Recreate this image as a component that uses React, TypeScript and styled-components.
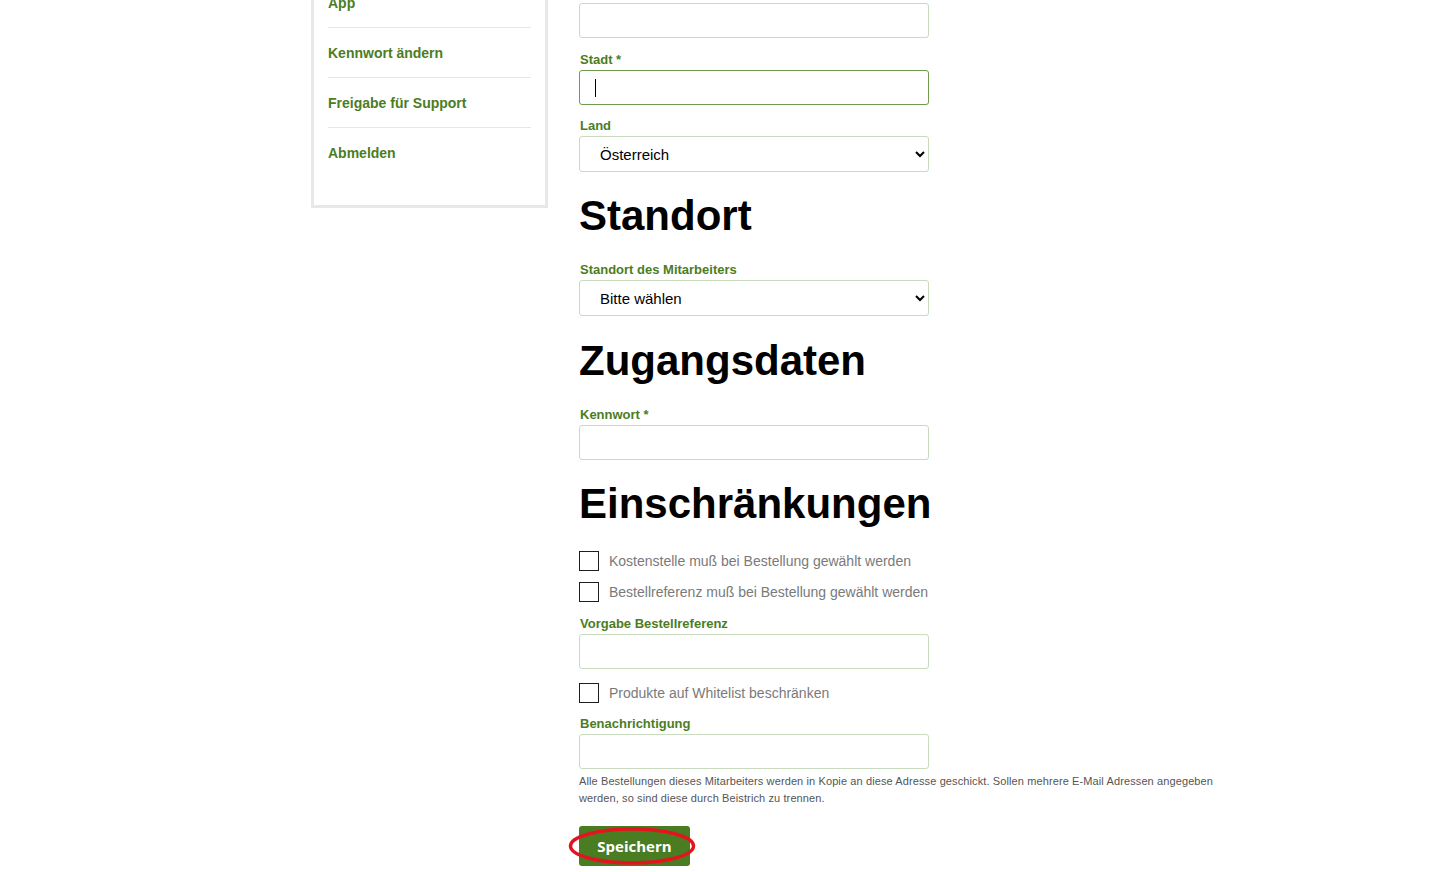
import styled, { createGlobalStyle } from "styled-components";

const GlobalStyle = createGlobalStyle`
  body {
    margin: 0;
    background: #ffffff;
    font-family: "Liberation Sans", Arial, sans-serif;
    overflow: hidden;
  }
`;

const green = "#4b7d1f";

const sideLinks = ["App", "Kennwort ändern", "Freigabe für Support", "Abmelden"];

const App = () => {
  return (
    <>
      <GlobalStyle />
      <Layout>
        <Sidebar>
          {sideLinks.map((link, i) => (
            <SideItem key={link} last={i === sideLinks.length - 1}>
              <SideLink href="#">{link}</SideLink>
            </SideItem>
          ))}
        </Sidebar>

        <Main>
          <Field spacing={14}>
            <TextInput type="text" />
          </Field>

          <Field>
            <Label>Stadt *</Label>
            <CaretWrap>
              <TextInput type="text" focused />
              <Caret />
            </CaretWrap>
          </Field>

          <Field>
            <Label>Land</Label>
            <Select defaultValue="at">
              <option value="at">Österreich</option>
              <option value="de">Deutschland</option>
            </Select>
          </Field>

          <Heading>Standort</Heading>

          <Field spacing={14}>
            <Label>Standort des Mitarbeiters</Label>
            <Select defaultValue="">
              <option value="">Bitte wählen</option>
            </Select>
          </Field>

          <Heading>Zugangsdaten</Heading>

          <Field>
            <Label>Kennwort *</Label>
            <TextInput type="password" />
          </Field>

          <Heading>Einschränkungen</Heading>

          <CheckGroup top={1} bottom={14}>
            <CheckRow>
              <Checkbox type="checkbox" />
              <CheckText>Kostenstelle muß bei Bestellung gewählt werden</CheckText>
            </CheckRow>
            <CheckRow>
              <Checkbox type="checkbox" />
              <CheckText>Bestellreferenz muß bei Bestellung gewählt werden</CheckText>
            </CheckRow>
          </CheckGroup>

          <Field>
            <Label>Vorgabe Bestellreferenz</Label>
            <TextInput type="text" />
          </Field>

          <CheckGroup top={1} bottom={13}>
            <CheckRow>
              <Checkbox type="checkbox" />
              <CheckText>Produkte auf Whitelist beschränken</CheckText>
            </CheckRow>
          </CheckGroup>

          <Field>
            <Label>Benachrichtigung</Label>
            <TextInput type="text" />
            <Help>
              Alle Bestellungen dieses Mitarbeiters werden in Kopie an diese Adresse geschickt. Sollen
              mehrere E-Mail Adressen angegeben werden, so sind diese durch Beistrich zu trennen.
            </Help>
          </Field>

          <ButtonWrap>
            <SaveButton>Speichern</SaveButton>
            <Marker viewBox="0 0 128 40" width="128" height="40">
              <ellipse cx="64" cy="20" rx="61.5" ry="17" fill="none" stroke="#e2151f" strokeWidth="3.5" />
            </Marker>
          </ButtonWrap>
        </Main>
      </Layout>
    </>
  );
};

export default App;

const Layout = styled.div`
  display: flex;
  align-items: flex-start;
  gap: 31px;
  margin-top: -25px;
  padding-left: 311px;
`;

const Sidebar = styled.ul`
  list-style: none;
  margin: 0;
  width: 237px;
  box-sizing: border-box;
  border: 3px solid #e8e8e8;
  padding: 0 14px 27px;
`;

const SideItem = styled.li<{ last?: boolean }>`
  height: 50px;
  box-sizing: border-box;
  display: flex;
  align-items: center;
  border-bottom: ${(p) => (p.last ? "none" : "1px solid #e6e6e6")};
`;

const SideLink = styled.a`
  color: ${green};
  font-size: 14px;
  font-weight: 700;
  text-decoration: none;
`;

const Main = styled.div`
  width: 640px;
  padding-top: 28px;
  display: flex;
  flex-direction: column;
`;

const Field = styled.div<{ spacing?: number }>`
  display: flex;
  flex-direction: column;
  margin-bottom: ${(p) => p.spacing ?? 13}px;
`;

const Label = styled.label`
  display: block;
  color: ${green};
  font-size: 13px;
  line-height: 15px;
  font-weight: 700;
  margin-bottom: 3px;
  padding-left: 1px;
`;

const TextInput = styled.input<{ focused?: boolean }>`
  width: 350px;
  height: 35px;
  box-sizing: border-box;
  border: 1px solid ${(p) => (p.focused ? "#6d9c4c" : "#c8dbbf")};
  border-radius: 3px;
  padding: 0 15px;
  font-size: 15px;
  font-family: "Liberation Sans", Arial, sans-serif;
  outline: none;
  background: #fff;
`;

const CaretWrap = styled.div`
  position: relative;
  width: 350px;
`;

const Caret = styled.span`
  position: absolute;
  left: 16px;
  top: 9px;
  width: 1px;
  height: 18px;
  background: #000;
`;

const Select = styled.select`
  width: 350px;
  height: 36px;
  box-sizing: border-box;
  border: 1px solid #c8dbbf;
  border-radius: 3px;
  padding: 0 6px 0 16px;
  font-size: 15px;
  font-family: "Liberation Sans", Arial, sans-serif;
  color: #000;
  background: #fff;
  outline: none;
`;

const Heading = styled.h1`
  margin: 6px 0 21px;
  font-size: 42px;
  line-height: 50px;
  font-weight: 700;
  color: #000;
  font-family: "Liberation Sans", Arial, sans-serif;
`;

const CheckGroup = styled.div<{ top: number; bottom: number }>`
  display: flex;
  flex-direction: column;
  gap: 11px;
  margin-top: ${(p) => p.top}px;
  margin-bottom: ${(p) => p.bottom}px;
`;

const CheckRow = styled.label`
  display: flex;
  align-items: center;
  gap: 10px;
  height: 20px;
`;

const Checkbox = styled.input`
  appearance: none;
  width: 20px;
  height: 20px;
  margin: 0;
  border: 1px solid #1e1e1e;
  background: #fff;
  box-sizing: border-box;
`;

const CheckText = styled.span`
  color: #7a7a7a;
  font-size: 14px;
`;

const Help = styled.p`
  margin: 4px 0 0;
  font-size: 11px;
  line-height: 17px;
  color: #555;
  letter-spacing: 0.01em;
`;

const ButtonWrap = styled.div`
  position: relative;
  margin-top: 6px;
  width: fit-content;
`;

const SaveButton = styled.button`
  width: 111px;
  height: 40px;
  border: 0;
  border-radius: 3px;
  background: #4a7d22;
  color: #fff;
  font-family: "Open Sans", "Liberation Sans", sans-serif;
  font-size: 15px;
  font-weight: 700;
  cursor: pointer;
`;

const Marker = styled.svg`
  position: absolute;
  left: -11px;
  top: 0;
  pointer-events: none;
`;
